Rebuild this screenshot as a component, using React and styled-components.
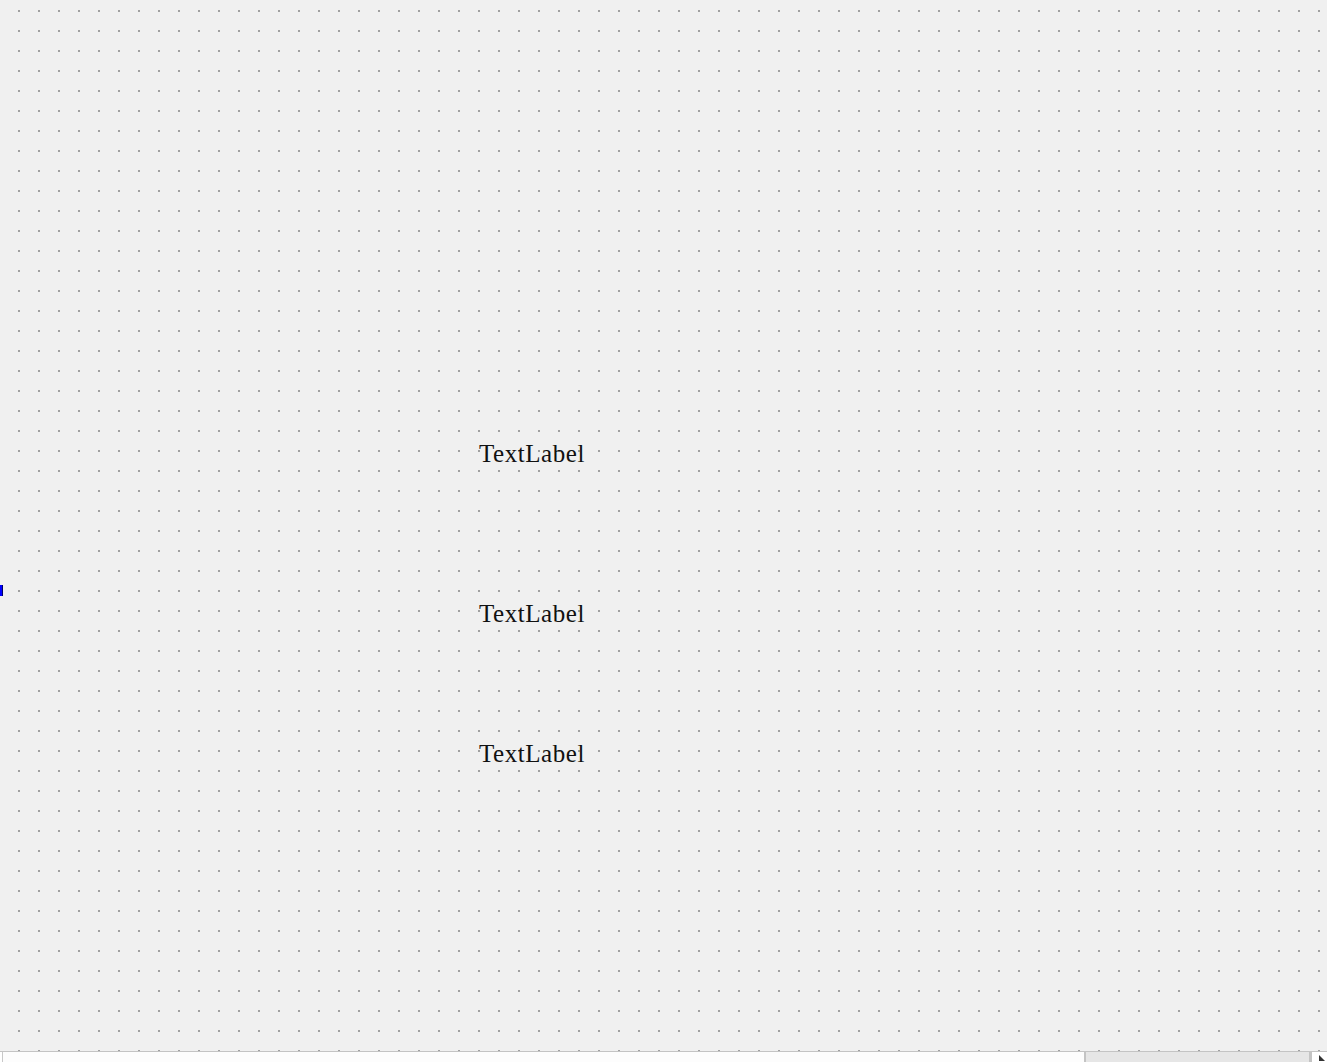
import React from 'react';
import styled, { createGlobalStyle } from 'styled-components';

const GlobalStyle = createGlobalStyle`
  html, body {
    margin: 0;
    padding: 0;
    overflow: hidden;
    background: #f0f0f0;
  }
`;

const Window = styled.div`
  width: 1327px;
  height: 1062px;
  display: flex;
  flex-direction: column;
  overflow: hidden;
`;

// designer form with a 20px dot grid
const Canvas = styled.div`
  position: relative;
  flex: 1;
  background-color: #f0f0f0;
  background-image: conic-gradient(at 2px 2px, transparent 75%, #a0a0a0 0);
  background-size: 20px 20px;
  background-position: 18px 10px;
  display: flex;
  flex-direction: column;
  align-items: flex-start;
  padding: 0 0 0 479px;
`;

const Label = styled.div`
  margin-top: ${p => p.$top}px;
  font-family: "Liberation Serif", "Noto Sans CJK SC", serif;
  font-size: 25px;
  line-height: 30px;
  letter-spacing: 0.55px;
  color: #111;
`;

const Marker = styled.div`
  position: absolute;
  left: 0;
  top: 585px;
  width: 2px;
  height: 11px;
  background: #0000ff;
  border-right: 1px solid #000060;
`;

const ScrollBar = styled.div`
  height: 10px;
  flex: none;
  display: flex;
  border-top: 1px solid #c4c4c4;
  background: #ffffff;
`;

const Track = styled.div`
  flex: 1;
  margin-left: 2px;
  border-left: 1px solid #c8c8c8;
  background: #fdfdfd;
`;

const Thumb = styled.div`
  width: 223px;
  border-left: 2px solid #c4c4c4;
  border-right: 3px solid #c4c4c4;
  background: #e6e6e6;
`;

const ArrowButton = styled.div`
  width: 15px;
  display: flex;
  justify-content: flex-end;
  padding-top: 3px;
  background: #fff;
`;

export default function App() {
  return (
    <>
      <GlobalStyle />
      <Window>
        <Canvas>
          <Marker />
          <Label $top={439}>TextLabel</Label>
          <Label $top={130}>TextLabel</Label>
          <Label $top={110}>TextLabel</Label>
        </Canvas>
        <ScrollBar>
          <Track />
          <Thumb />
          <ArrowButton>
            <svg width="8" height="8" viewBox="0 0 8 8">
              <path d="M0 0 L6 6 L0 6 Z" fill="#333" />
            </svg>
          </ArrowButton>
        </ScrollBar>
      </Window>
    </>
  );
}
